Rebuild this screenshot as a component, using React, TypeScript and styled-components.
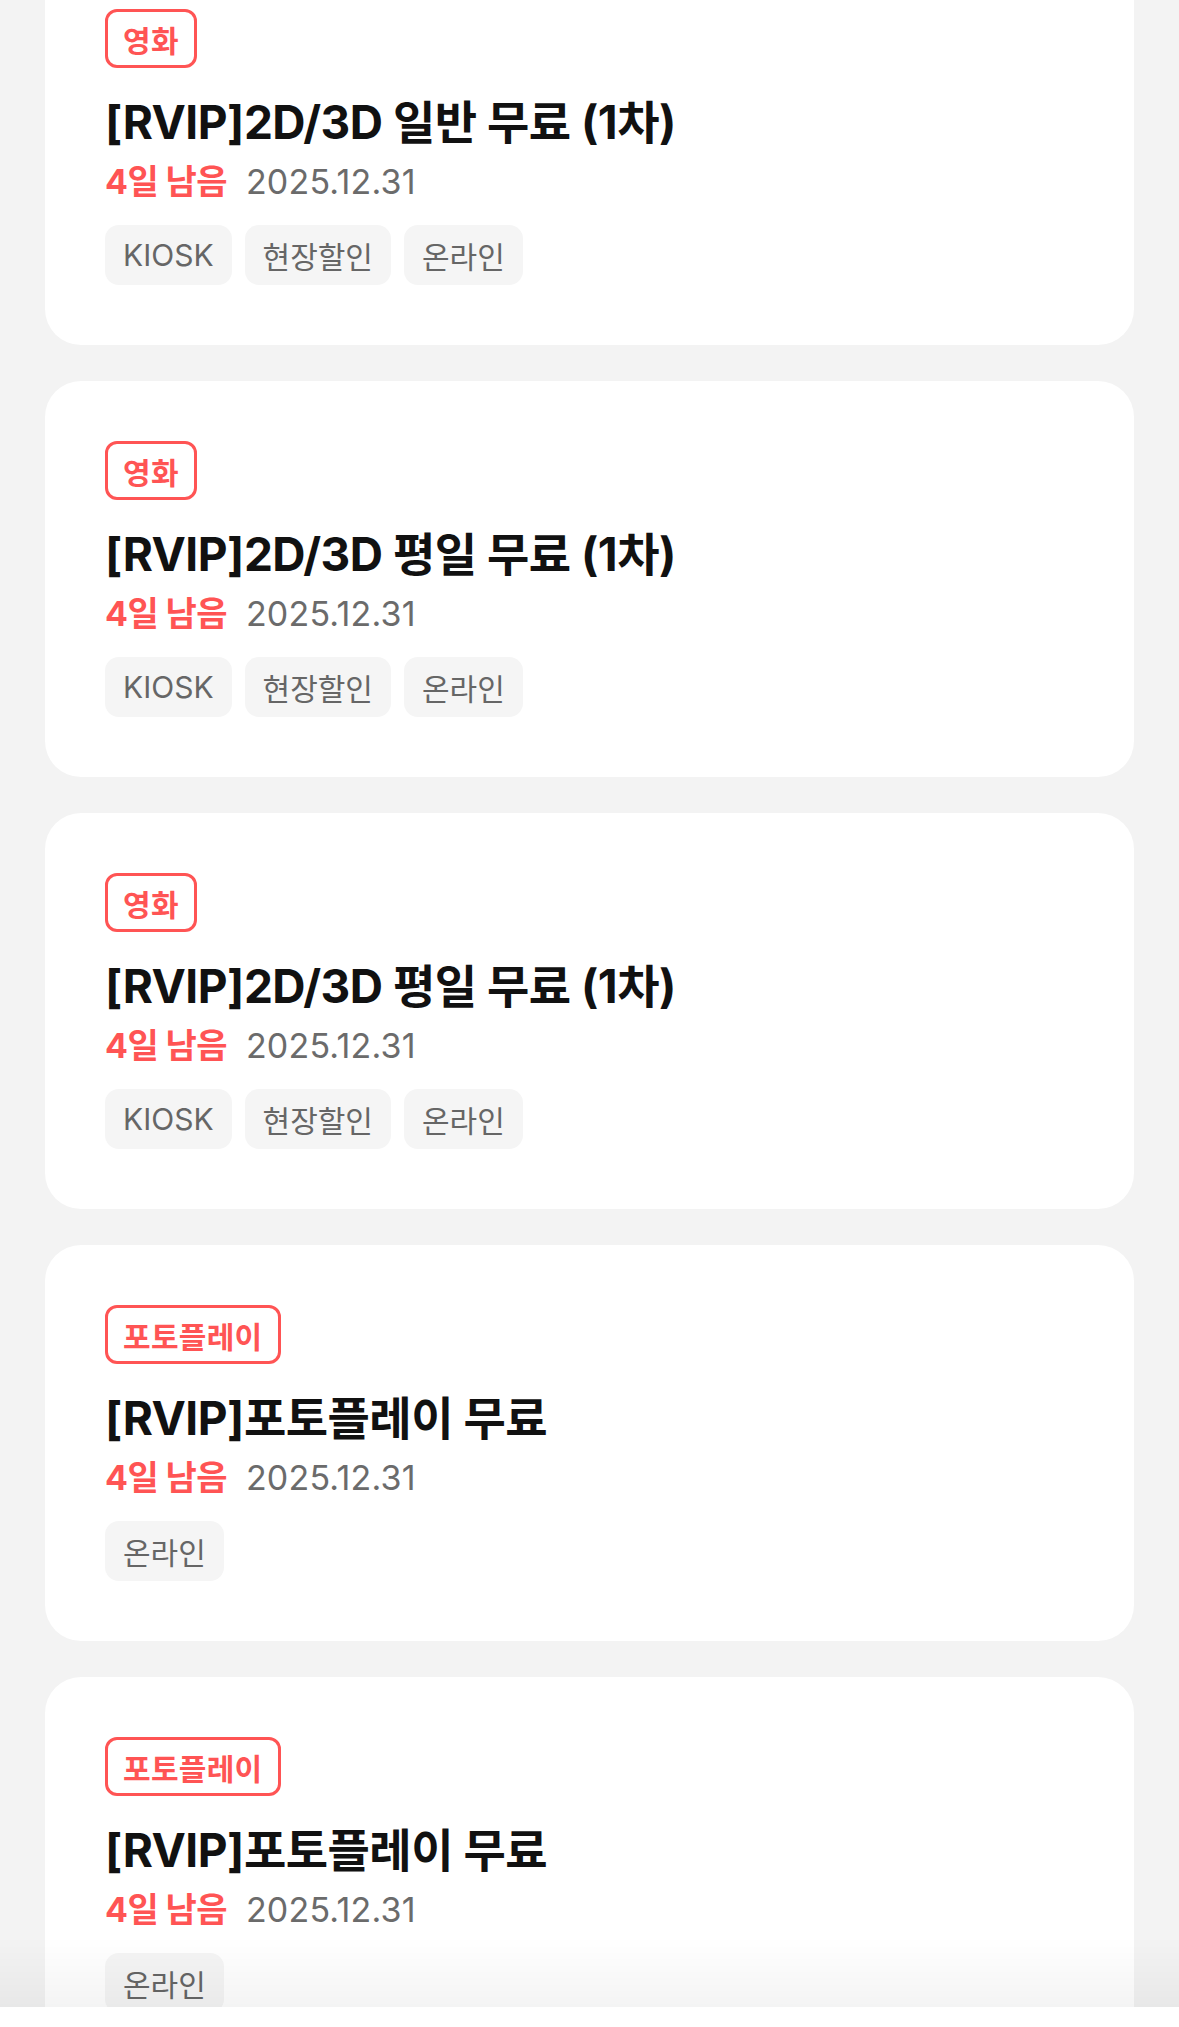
import React from "react";
import styled, { createGlobalStyle } from "styled-components";

const GlobalStyle = createGlobalStyle`
  html, body {
    margin: 0;
    padding: 0;
    background: #f3f3f3;
  }
  body {
    font-family: Inter, "Noto Sans CJK KR", "Noto Sans", sans-serif;
    -webkit-font-smoothing: antialiased;
  }
`;

const RED = "#ff5454";

const Page = styled.main`
  min-height: 100vh;
  background: #f3f3f3;
  overflow: hidden;
`;

const List = styled.ul`
  list-style: none;
  margin: -51px 0 0;
  padding: 0 45px 60px;
  display: flex;
  flex-direction: column;
  gap: 36px;
`;

const Card = styled.li`
  background: #ffffff;
  border-radius: 36px;
  padding: 60px;
  display: flex;
  flex-direction: column;
  align-items: flex-start;
`;

const Category = styled.span`
  box-sizing: border-box;
  height: 59px;
  display: inline-flex;
  align-items: center;
  padding: 0 15px;
  border: 3px solid ${RED};
  border-radius: 12px;
  color: ${RED};
  font-size: 30px;
  font-weight: 700;
  letter-spacing: 0.3px;
`;

const Title = styled.h2`
  margin: 24px 0 0;
  font-size: 46px;
  line-height: 60px;
  font-weight: 700;
  color: #111111;
  letter-spacing: -0.5px;
`;

const Meta = styled.div`
  margin-top: 8px;
  display: flex;
  align-items: baseline;
  gap: 19px;
  line-height: 44px;
  font-size: 34px;
`;

const DaysLeft = styled.span`
  color: ${RED};
  font-weight: 700;
  letter-spacing: -0.6px;
`;

const DateText = styled.span`
  color: #6b6b6b;
  font-weight: 400;
  letter-spacing: 0.2px;
`;

const Tags = styled.div`
  margin-top: 21px;
  display: flex;
  gap: 13px;
`;

const Tag = styled.span`
  box-sizing: border-box;
  height: 60px;
  display: inline-flex;
  align-items: center;
  padding: 0 18px;
  background: #f5f5f5;
  border-radius: 14px;
  color: #666666;
  font-size: 30px;
  font-weight: 400;
  letter-spacing: 0;
`;

const BottomBar = styled.div`
  position: fixed;
  left: 0;
  right: 0;
  bottom: 0;
  height: 20px;
  background: #ffffff;

  &::before {
    content: "";
    position: absolute;
    left: 0;
    right: 0;
    bottom: 100%;
    height: 70px;
    background: linear-gradient(to bottom, rgba(0, 0, 0, 0), rgba(0, 0, 0, 0.045));
    pointer-events: none;
  }
`;

type Coupon = {
  category: string;
  title: string;
  daysLeft: string;
  date: string;
  tags: string[];
};

const coupons: Coupon[] = [
  { category: "영화", title: "[RVIP]2D/3D 일반 무료 (1차)", daysLeft: "4일 남음", date: "2025.12.31", tags: ["KIOSK", "현장할인", "온라인"] },
  { category: "영화", title: "[RVIP]2D/3D 평일 무료 (1차)", daysLeft: "4일 남음", date: "2025.12.31", tags: ["KIOSK", "현장할인", "온라인"] },
  { category: "영화", title: "[RVIP]2D/3D 평일 무료 (1차)", daysLeft: "4일 남음", date: "2025.12.31", tags: ["KIOSK", "현장할인", "온라인"] },
  { category: "포토플레이", title: "[RVIP]포토플레이 무료", daysLeft: "4일 남음", date: "2025.12.31", tags: ["온라인"] },
  { category: "포토플레이", title: "[RVIP]포토플레이 무료", daysLeft: "4일 남음", date: "2025.12.31", tags: ["온라인"] },
];

export default function App() {
  return (
    <Page>
      <GlobalStyle />
      <List>
        {coupons.map((c, i) => (
          <Card key={i}>
            <Category>{c.category}</Category>
            <Title>{c.title}</Title>
            <Meta>
              <DaysLeft>{c.daysLeft}</DaysLeft>
              <DateText>{c.date}</DateText>
            </Meta>
            <Tags>
              {c.tags.map((t) => (
                <Tag key={t}>{t}</Tag>
              ))}
            </Tags>
          </Card>
        ))}
      </List>
      <BottomBar />
    </Page>
  );
}
